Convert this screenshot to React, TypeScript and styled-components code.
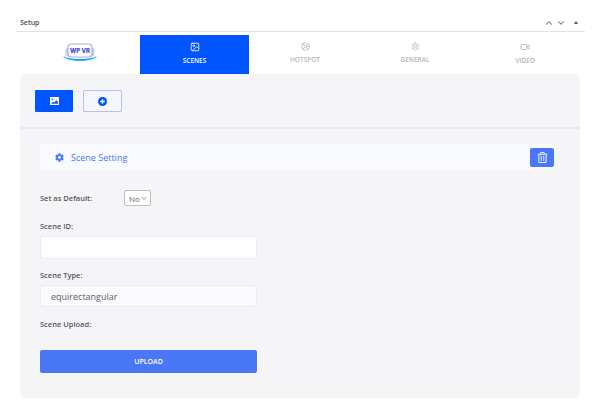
import React from 'react'
import styled, { createGlobalStyle } from 'styled-components'
import { ChevronUp, ChevronDown, Image, LifeBuoy, Settings, Video } from 'lucide-react'
import { FaCog, FaRegTrashAlt } from 'react-icons/fa'

const tabs = [
  { label: 'HOTSPOT', icon: <LifeBuoy size={9} /> },
  { label: 'GENERAL', icon: <Settings size={9} /> },
  { label: 'VIDEO', icon: <Video size={10} /> },
]

const App = () => {
  return (
    <Page>
      <GlobalStyle />
      <Header>
        <HeaderTitle>Setup</HeaderTitle>
        <HeaderActions>
          <ChevronUp size={10} strokeWidth={2.5} />
          <ChevronDown size={10} strokeWidth={2.5} />
          <SmallArrow />
        </HeaderActions>
      </Header>

      <TabBar>
        <LogoCell>
          <svg width="36" height="22" viewBox="0 0 36 22">
            <path d="M1 13.5c1 3 8 5.5 17 5.5s16-2.500 17-5.500c-2 2-8 3.500-17 3.500S3 15.500 1 13.500z" fill="#19a9f5" />
            <rect x="3.500" y="6" width="3" height="8" rx="1.500" fill="#b9d4fb" />
            <rect x="29.500" y="6" width="3" height="8" rx="1.500" fill="#b9d4fb" />
            <rect x="6" y="2" width="24" height="13" rx="3.500" fill="#fff" stroke="#b5a6f5" strokeWidth="1.200" />
            <text x="18" y="11" textAnchor="middle" fontSize="6" fontWeight="800" fontFamily="Inter, sans-serif" fill="#4b3fd0">WP VR</text>
          </svg>
        </LogoCell>
        <Tab $active>
          <Image size={10} />
          <TabLabel>SCENES</TabLabel>
        </Tab>
        {tabs.map((tab) => (
          <Tab key={tab.label}>
            {tab.icon}
            <TabLabel>{tab.label}</TabLabel>
          </Tab>
        ))}
      </TabBar>

      <Panel>
        <SceneNav>
          <SceneButton>
            <svg width="9" height="8" viewBox="0 0 9 8">
              <path d="M0.500 0h8a.500.500 0 0 1 .500.500v7a.500.500 0 0 1-.500.500h-8a.500.500 0 0 1-.500-.500v-7A.500.500 0 0 1 .500 0z" fill="#fff" />
              <path d="M1 6.800l2-2.300 1.300 1.200L6.300 3 8 5.500v1.300z" fill="#0055ff" />
              <circle cx="2.300" cy="2.300" r=".8" fill="#0055ff" />
            </svg>
          </SceneButton>
          <AddButton>
            <svg width="9" height="9" viewBox="0 0 9 9">
              <circle cx="4.500" cy="4.500" r="4.500" fill="#0055ff" />
              <path d="M4.500 2.200v4.600M2.200 4.500h4.600" stroke="#fff" strokeWidth="1.300" />
            </svg>
          </AddButton>
        </SceneNav>

        <SceneBody>
          <SettingBar>
            <SettingTitle>
              <FaCog size={9} />
              Scene Setting
            </SettingTitle>
            <DeleteButton>
              <FaRegTrashAlt size={11} />
            </DeleteButton>
          </SettingBar>

          <DefaultRow>
            <Label>Set as Default:</Label>
            <SelectBox>
              No
              <ChevronDown size={9} strokeWidth={2} />
            </SelectBox>
          </DefaultRow>

          <Field>
            <Label>Scene ID:</Label>
            <TextInput />
          </Field>

          <TypeField>
            <Label>Scene Type:</Label>
            <TextInput $readOnly>equirectangular</TextInput>
          </TypeField>

          <UploadField>
            <Label>Scene Upload:</Label>
            <UploadButton>UPLOAD</UploadButton>
          </UploadField>
        </SceneBody>
      </Panel>
    </Page>
  )
}

export default App

const GlobalStyle = createGlobalStyle`
  html, body {
    margin: 0;
    padding: 0;
    background: #fff;
  }
  body {
    font-family: "Open Sans", "Noto Sans", sans-serif;
  }
`

const Page = styled.div`
  width: 600px;
  height: 416px;
  overflow: hidden;
  box-sizing: border-box;
  padding-top: 14px;
`

const Header = styled.div`
  margin: 0 15px 0 17px;
  height: 17px;
  padding: 0 7px 0 3px;
  display: flex;
  align-items: center;
  justify-content: space-between;
  border-bottom: 1px solid #e2e3e6;
`

const HeaderTitle = styled.span`
  font-size: 7px;
  font-weight: 600;
  color: #4a4a4f;
`

const HeaderActions = styled.div`
  display: flex;
  align-items: center;
  gap: 2px;
  color: #6f7175;
`

const SmallArrow = styled.span`
  width: 0;
  height: 0;
  margin-left: 6px;
  border-left: 2px solid transparent;
  border-right: 2px solid transparent;
  border-bottom: 3px solid #55575b;
`

const TabBar = styled.div`
  margin: 3px 20px 0;
  height: 39px;
  display: grid;
  grid-template-columns: 120px repeat(4, 110px);
`

const LogoCell = styled.div`
  display: flex;
  align-items: center;
  justify-content: center;
  padding-bottom: 3px;
  padding-right: 1px;
`

const Tab = styled.div<{ $active?: boolean }>`
  width: ${(p) => (p.$active ? '109px' : 'auto')};
  display: flex;
  flex-direction: column;
  align-items: center;
  justify-content: flex-start;
  padding-top: 7px;
  gap: 5px;
  box-sizing: border-box;
  background: ${(p) => (p.$active ? '#0055ff' : 'transparent')};
  color: ${(p) => (p.$active ? '#fff' : '#b4b5c0')};
`

const TabLabel = styled.span`
  font-size: 6.5px;
  font-weight: 600;
  line-height: 8px;
`

const Panel = styled.div`
  margin: 0 20px;
  height: 324px;
  background: #f5f5f8;
  border-radius: 5px;
  box-sizing: border-box;
`

const SceneNav = styled.div`
  height: 55px;
  padding: 16px 15px 0;
  box-sizing: border-box;
  display: flex;
  align-items: flex-start;
  gap: 10px;
  border-bottom: 2px solid #e6e8fb;
`

const SceneButton = styled.div`
  width: 38px;
  height: 22px;
  display: flex;
  align-items: center;
  justify-content: center;
  background: #0055ff;
  border-radius: 1px;
`

const AddButton = styled(SceneButton)`
  width: 39px;
  background: #f6f6fa;
  border: 1.5px solid #aec3fb;
  box-sizing: border-box;
`

const SceneBody = styled.div`
  padding: 15px 26px 0 20px;
`

const SettingBar = styled.div`
  height: 26px;
  padding: 0 0 0 15px;
  display: flex;
  align-items: center;
  justify-content: space-between;
  background: #f9faff;
`

const SettingTitle = styled.div`
  display: flex;
  align-items: center;
  gap: 7px;
  font-size: 9px;
  font-weight: 500;
  color: #4a77f8;
`

const DeleteButton = styled.div`
  width: 24px;
  height: 19px;
  display: flex;
  align-items: center;
  justify-content: center;
  background: #4a77f8;
  border-radius: 2px;
  color: #eaf0ff;
`

const Label = styled.label`
  font-size: 7.5px;
  font-weight: 600;
  line-height: 10px;
  color: #55555c;
`

const DefaultRow = styled.div`
  margin-top: 20px;
  height: 16px;
  display: flex;
  align-items: center;
  ${Label} {
    width: 84px;
  }
`

const SelectBox = styled.div`
  width: 27px;
  height: 16px;
  box-sizing: border-box;
  padding: 0 2px 0 4px;
  display: flex;
  align-items: center;
  justify-content: space-between;
  font-size: 8px;
  color: #5f6066;
  background: #fff;
  border: 1px solid #bdbdc3;
  border-radius: 2px;
`

const Field = styled.div`
  width: 217px;
  margin-top: 15px;
  display: flex;
  flex-direction: column;
  gap: 5px;
`

const TextInput = styled.div<{ $readOnly?: boolean }>`
  height: ${(p) => (p.$readOnly ? '22px' : '23px')};
  box-sizing: border-box;
  padding-left: 10px;
  display: flex;
  align-items: center;
  font-size: 9px;
  color: #5f6066;
  background: ${(p) => (p.$readOnly ? '#fafafc' : '#fff')};
  border: 1px solid #e8ebfb;
  border-radius: 2px;
`

const TypeField = styled(Field)`
  margin-top: 11px;
`

const UploadField = styled(Field)`
  margin-top: 12px;
  gap: 21px;
`

const UploadButton = styled.div`
  height: 23px;
  display: flex;
  align-items: center;
  justify-content: center;
  font-size: 7px;
  font-weight: 600;
  color: #fff;
  background: #4a77f8;
  border-radius: 2px;
`
